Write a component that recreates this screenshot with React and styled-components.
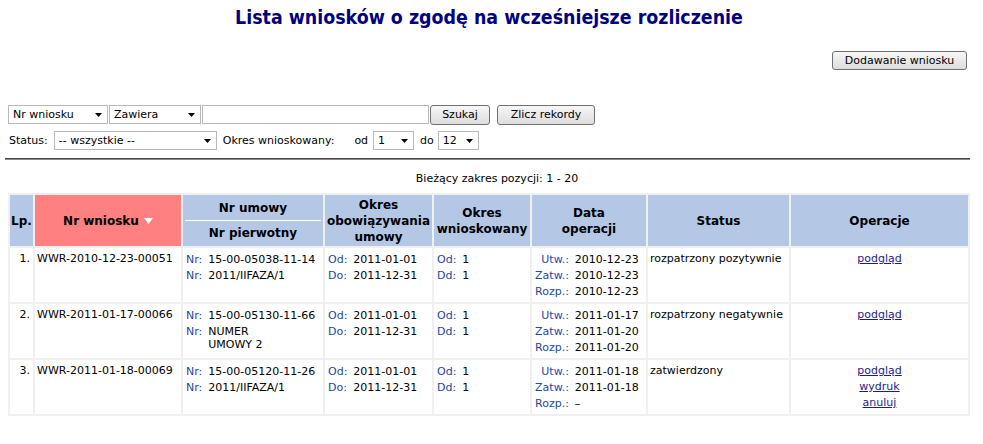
import React from 'react';
import styled, { createGlobalStyle } from 'styled-components';

const GlobalStyle = createGlobalStyle`
  body {
    margin: 0;
    background: #fff;
    color: #000;
    font-family: "DejaVu Sans", Verdana, sans-serif;
    font-size: 11px;
  }
`;

const Page = styled.div`
  width: 962px;
  padding: 6px 0 0 8px;
`;

const Title = styled.h1`
  margin: 0;
  text-align: center;
  font: bold 19.4px/24px "DejaVu Sans Condensed", "DejaVu Sans", sans-serif;
  font-stretch: condensed;
  color: #000080;
`;

const ActionBar = styled.div`
  display: flex;
  justify-content: flex-end;
  margin-top: 21px;
  padding-right: 3px;
`;

const Button = styled.button`
  box-sizing: border-box;
  width: ${p => p.$w}px;
  height: ${p => p.$h || 20}px;
  padding: 0;
  margin-left: ${p => p.$gap || 0}px;
  font: 11px "DejaVu Sans", sans-serif;
  color: #000;
  border: 1px solid #707070;
  border-radius: 3px;
  background: linear-gradient(#f7f7f7, #dddddd);
  cursor: pointer;
`;

const Filters = styled.div`
  display: flex;
  flex-direction: column;
  gap: 7px;
  margin-top: 35px;
`;

const FilterRow = styled.div`
  display: flex;
  align-items: center;
  height: 19px;
`;

const SelectBox = styled.div`
  display: flex;
  align-items: center;
  box-sizing: border-box;
  width: ${p => p.$w}px;
  height: 19px;
  margin-left: ${p => p.$gap || 0}px;
  border: 1px solid #b8b8b8;
  background: #fff;
`;

const NativeSelect = styled.select`
  flex: 1;
  min-width: 0;
  height: 100%;
  padding: 0 0 0 4px;
  border: 0;
  outline: none;
  background: transparent;
  appearance: none;
  font: 11px "DejaVu Sans", sans-serif;
  color: #000;
`;

const ArrowIcon = styled.svg`
  flex: none;
  margin: 1px 5px 0 4px;
`;

const TextInput = styled.input`
  box-sizing: border-box;
  width: ${p => p.$w}px;
  height: 19px;
  margin-left: 1px;
  border: 1px solid #b8b8b8;
  padding: 0 3px;
  font: 11px "DejaVu Sans", sans-serif;
`;

const FieldLabel = styled.span`
  margin-left: ${p => p.$gap || 0}px;
  margin-right: ${p => p.$after || 4}px;
  white-space: nowrap;
`;

const Rule = styled.hr`
  width: 965px;
  height: 0;
  margin: 8px 0 0 -3px;
  border: 0;
  border-top: 1px solid #474747;
  border-bottom: 1px solid #8a8a8a;
`;

const RangeInfo = styled.div`
  margin-top: 12px;
  text-align: center;
  line-height: 14px;
  padding-left: 16px;
`;

const Grid = styled.table`
  width: 962px;
  margin-top: 7px;
  table-layout: fixed;
  border-collapse: separate;
  border-spacing: 2px;
  background: #f0f0f0;
`;

const Th = styled.th`
  box-sizing: border-box;
  width: ${p => p.$w}px;
  height: 51px;
  padding: 0 1px;
  background: ${p => (p.$sorted ? '#ff8080' : '#b4c8e6')};
  font: bold 12px/16px "DejaVu Sans", sans-serif;
  text-align: center;
  vertical-align: middle;
`;

const SplitTop = styled.div`
  height: 25px;
  line-height: 27px;
  margin: 0 1px;
  border-bottom: 1px solid #fff;
`;

const SplitBottom = styled.div`
  height: 25px;
  line-height: 25px;
`;

const SortMark = styled.svg`
  margin-left: 5px;
  vertical-align: middle;
`;

const Td = styled.td`
  background: #fff;
  vertical-align: top;
  padding: 3px ${p => (p.$align === 'right' ? 3 : 2)}px 3px 2px;
  line-height: 16px;
  text-align: ${p => p.$align || 'left'};
  white-space: nowrap;
`;

const Pairs = styled.div`
  display: grid;
  grid-template-columns: auto auto;
  justify-content: start;
  column-gap: 6px;
  padding-left: 1px;
`;

const PairLabel = styled.span`
  padding: 1.5px 0;
  line-height: 13px;
  color: #2446a6;
  justify-self: ${p => (p.$right ? 'end' : 'start')};
`;

const PairValue = styled.span`
  padding: 1.5px 0;
  line-height: 13px;
`;

const Actions = styled.div`
  display: flex;
  flex-direction: column;
  align-items: center;
`;

const ActionLink = styled.a`
  color: #1c1c96;
  text-decoration: underline;
  line-height: 16px;
  cursor: pointer;
`;

const Arrow = () => (
  <ArrowIcon width="7" height="4" viewBox="0 0 7 4">
    <path d="M0 0h7L3.5 4z" fill="#000" />
  </ArrowIcon>
);

const Select = ({ w, gap, value }) => (
  <SelectBox $w={w} $gap={gap}>
    <NativeSelect defaultValue={value}>
      <option>{value}</option>
    </NativeSelect>
    <Arrow />
  </SelectBox>
);

// listy par label/wartość mają powtarzające się etykiety, więc klucz to indeks
const PairList = ({ items, right }) => (
  <Pairs>
    {items.map(([label, value], i) => (
      <React.Fragment key={i}>
        <PairLabel $right={right}>{label}</PairLabel>
        <PairValue>{value}</PairValue>
      </React.Fragment>
    ))}
  </Pairs>
);

const rows = [
  {
    no: '1.',
    id: 'WWR-2010-12-23-00051',
    contract: [['Nr:', '15-00-05038-11-14'], ['Nr:', '2011/IIFAZA/1']],
    validity: [['Od:', '2011-01-01'], ['Do:', '2011-12-31']],
    requested: [['Od:', '1'], ['Dd:', '1']],
    dates: [['Utw.:', '2010-12-23'], ['Zatw.:', '2010-12-23'], ['Rozp.:', '2010-12-23']],
    status: 'rozpatrzony pozytywnie',
    actions: ['podgląd'],
  },
  {
    no: '2.',
    id: 'WWR-2011-01-17-00066',
    contract: [['Nr:', '15-00-05130-11-66'], ['Nr:', <>NUMER<br />UMOWY 2</>]],
    validity: [['Od:', '2011-01-01'], ['Do:', '2011-12-31']],
    requested: [['Od:', '1'], ['Dd:', '1']],
    dates: [['Utw.:', '2011-01-17'], ['Zatw.:', '2011-01-20'], ['Rozp.:', '2011-01-20']],
    status: 'rozpatrzony negatywnie',
    actions: ['podgląd'],
  },
  {
    no: '3.',
    id: 'WWR-2011-01-18-00069',
    contract: [['Nr:', '15-00-05120-11-26'], ['Nr:', '2011/IIFAZA/1']],
    validity: [['Od:', '2011-01-01'], ['Do:', '2011-12-31']],
    requested: [['Od:', '1'], ['Dd:', '1']],
    dates: [['Utw.:', '2011-01-18'], ['Zatw.:', '2011-01-18'], ['Rozp.:', '–']],
    status: 'zatwierdzony',
    actions: ['podgląd', 'wydruk', 'anuluj'],
  },
];

const App = () => (
  <Page>
    <GlobalStyle />
    <Title>Lista wniosków o zgodę na wcześniejsze rozliczenie</Title>

    <ActionBar>
      <Button $w={135} $h={19}>Dodawanie wniosku</Button>
    </ActionBar>

    <Filters>
      <FilterRow>
        <Select w={100} value="Nr wniosku" />
        <Select w={92} gap={1} value="Zawiera" />
        <TextInput $w={227} />
        <Button $w={60} $gap={1}>Szukaj</Button>
        <Button $w={98} $gap={7}>Zlicz rekordy</Button>
      </FilterRow>
      <FilterRow>
        <FieldLabel $gap={1} $after={6}>Status:</FieldLabel>
        <Select w={163} value="-- wszystkie --" />
        <FieldLabel $gap={6} $after={20}>Okres wnioskowany:</FieldLabel>
        <FieldLabel $after={5}>od</FieldLabel>
        <Select w={41} value="1" />
        <FieldLabel $gap={6} $after={4}>do</FieldLabel>
        <Select w={41} value="12" />
      </FilterRow>
    </Filters>

    <Rule />
    <RangeInfo>Bieżący zakres pozycji: 1 - 20</RangeInfo>

    <Grid>
      <thead>
        <tr>
          <Th $w={23}>Lp.</Th>
          <Th $w={146} $sorted>
            Nr wniosku
            <SortMark width="9" height="6" viewBox="0 0 9 6">
              <path d="M0 0h9L4.5 6z" fill="#fff" />
            </SortMark>
          </Th>
          <Th $w={140}>
            <SplitTop>Nr umowy</SplitTop>
            <SplitBottom>Nr pierwotny</SplitBottom>
          </Th>
          <Th $w={107}>Okres obowiązywania umowy</Th>
          <Th $w={96}>Okres wnioskowany</Th>
          <Th $w={114}>Data<br />operacji</Th>
          <Th $w={141}>Status</Th>
          <Th $w={177}>Operacje</Th>
        </tr>
      </thead>
      <tbody>
        {rows.map(row => (
          <tr key={row.id}>
            <Td $align="right">{row.no}</Td>
            <Td>{row.id}</Td>
            <Td><PairList items={row.contract} /></Td>
            <Td><PairList items={row.validity} /></Td>
            <Td><PairList items={row.requested} /></Td>
            <Td><PairList items={row.dates} right /></Td>
            <Td>{row.status}</Td>
            <Td $align="center">
              <Actions>
                {row.actions.map(a => <ActionLink key={a}>{a}</ActionLink>)}
              </Actions>
            </Td>
          </tr>
        ))}
      </tbody>
    </Grid>
  </Page>
);

export default App;
